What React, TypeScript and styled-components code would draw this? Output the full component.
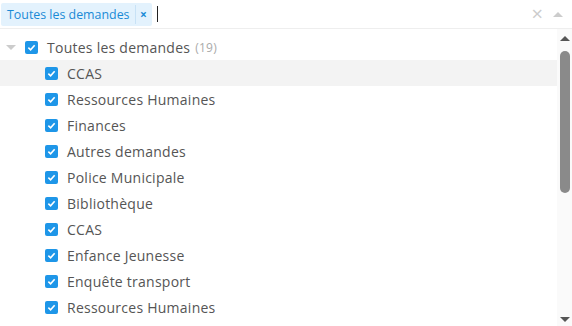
import styled, { createGlobalStyle } from "styled-components";

const GlobalStyle = createGlobalStyle`
  html, body {
    margin: 0;
    padding: 0;
    background: #fff;
  }
  body {
    font-family: "Open Sans", "Liberation Sans", sans-serif;
    color: #555;
  }
`;

const Wrapper = styled.div`
  width: 572px;
  height: 326px;
  display: flex;
  flex-direction: column;
  overflow: hidden;
`;

const Control = styled.div`
  height: 29px;
  display: flex;
  align-items: center;
  border-bottom: 1px solid #eee;
  padding-left: 1px;
  box-sizing: border-box;
`;

const Tag = styled.div`
  height: 23px;
  display: flex;
  align-items: center;
  background: #e3f2fd;
  color: #1a8ad6;
  border-radius: 2px;
  font-size: 12.4px;
`;

const TagLabel = styled.span`
  padding: 0 5px 0 6px;
  border-right: 1px solid #c8e2f6;
  line-height: 19px;
`;

const TagRemove = styled.span`
  width: 16px;
  text-align: center;
  font-size: 12px;
  font-weight: 700;
`;

const Caret = styled.span`
  width: 1px;
  height: 16px;
  background: #222;
  margin-left: 5px;
`;

const Spacer = styled.div`
  flex: 1;
`;

const ClearBtn = styled.span`
  color: #ccc;
  font-size: 20px;
  margin-right: 10px;
  line-height: 1;
`;

const Arrow = styled.span<{ $dir: "up" | "down"; $color: string; $size: number }>`
  display: block;
  width: 0;
  height: 0;
  border-left: ${(p) => p.$size}px solid transparent;
  border-right: ${(p) => p.$size}px solid transparent;
  ${(p) =>
    p.$dir === "up"
      ? `border-bottom: ${p.$size}px solid ${p.$color};`
      : `border-top: ${p.$size}px solid ${p.$color};`}
`;

const Body = styled.div`
  flex: 1;
  display: flex;
  min-height: 0;
`;

const List = styled.ul`
  flex: 1;
  list-style: none;
  margin: 0;
  padding: 5px 0 0;
`;

const Row = styled.li<{ $level: number; $active?: boolean }>`
  height: 26px;
  display: flex;
  align-items: center;
  padding-left: ${(p) => (p.$level === 0 ? 6 : 45)}px;
  background: ${(p) => (p.$active ? "#f3f3f3" : "transparent")};
  font-size: 14px;
  letter-spacing: 0.25px;
  white-space: nowrap;
`;

const Toggle = styled.span`
  width: 19px;
  display: flex;
  align-items: center;
`;

const Box = styled.span`
  width: 13px;
  height: 13px;
  border-radius: 2px;
  background: #1e96e8;
  display: flex;
  align-items: center;
  justify-content: center;
  margin-right: 9px;
  flex-shrink: 0;
`;

const Count = styled.span`
  color: #aaa;
  font-size: 12px;
  margin-left: 5px;
`;

const Scrollbar = styled.div`
  width: 15px;
  background: #fafafa;
  display: flex;
  flex-direction: column;
  align-items: center;
  padding: 7px 0 4px;
  box-sizing: border-box;
`;

const Thumb = styled.div`
  width: 10px;
  height: 142px;
  background: #8a8a8a;
  border-radius: 5px;
  margin-top: 10px;
`;

function Check() {
  return (
    <svg width="9" height="9" viewBox="0 0 10 10">
      <path d="M1.5 5.2 L4 7.5 L8.5 2.5" fill="none" stroke="#fff" strokeWidth="1.8" />
    </svg>
  );
}

const items = [
  "CCAS",
  "Ressources Humaines",
  "Finances",
  "Autres demandes",
  "Police Municipale",
  "Bibliothèque",
  "CCAS",
  "Enfance Jeunesse",
  "Enquête transport",
  "Ressources Humaines",
];

export default function App() {
  return (
    <Wrapper>
      <GlobalStyle />
      <Control>
        <Tag>
          <TagLabel>Toutes les demandes</TagLabel>
          <TagRemove>×</TagRemove>
        </Tag>
        <Caret />
        <Spacer />
        <ClearBtn>×</ClearBtn>
        <span style={{ marginRight: 9 }}>
          <Arrow $dir="up" $color="#ccc" $size={5} />
        </span>
      </Control>
      <Body>
        <List>
          <Row $level={0}>
            <Toggle>
              <Arrow $dir="down" $color="#ccc" $size={5} />
            </Toggle>
            <Box>
              <Check />
            </Box>
            Toutes les demandes
            <Count>(19)</Count>
          </Row>
          {items.map((name, i) => (
            <Row key={i} $level={1} $active={i === 0}>
              <Box>
                <Check />
              </Box>
              {name}
            </Row>
          ))}
        </List>
        <Scrollbar>
          <Arrow $dir="up" $color="#555" $size={5} />
          <Thumb />
          <Spacer />
          <Arrow $dir="down" $color="#555" $size={5} />
        </Scrollbar>
      </Body>
    </Wrapper>
  );
}
